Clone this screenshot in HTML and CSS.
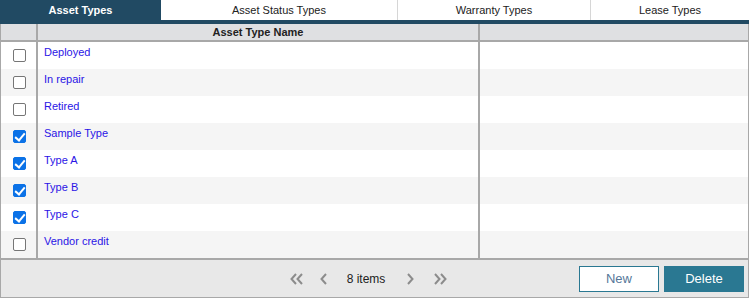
FILE: index.html
```html
<!DOCTYPE html>
<html lang="en">
<head>
    <meta charset="UTF-8">
    <title>Asset Types</title>
    <link rel="stylesheet" href="styles.css">
</head>
<body>
    <div class="panel">
        <div class="tabs">
            <div class="tab active" style="width: 161px">Asset Types</div>
            <div class="tab" style="width: 237px">Asset Status Types</div>
            <div class="tab" style="width: 193px">Warranty Types</div>
            <div class="tab last">Lease Types</div>
        </div>

        <div class="grid">
            <div class="grid-head">
                <div class="cell check"></div>
                <div class="cell name">Asset Type Name</div>
                <div class="cell rest"></div>
            </div>
            <div class="row">
                <div class="cell check"><span class="box"></span></div>
                <div class="cell name">Deployed</div>
                <div class="cell rest"></div>
            </div>
            <div class="row alt">
                <div class="cell check"><span class="box"></span></div>
                <div class="cell name">In repair</div>
                <div class="cell rest"></div>
            </div>
            <div class="row">
                <div class="cell check"><span class="box"></span></div>
                <div class="cell name">Retired</div>
                <div class="cell rest"></div>
            </div>
            <div class="row alt">
                <div class="cell check"><span class="box on"></span></div>
                <div class="cell name">Sample Type</div>
                <div class="cell rest"></div>
            </div>
            <div class="row">
                <div class="cell check"><span class="box on"></span></div>
                <div class="cell name">Type A</div>
                <div class="cell rest"></div>
            </div>
            <div class="row alt">
                <div class="cell check"><span class="box on"></span></div>
                <div class="cell name">Type B</div>
                <div class="cell rest"></div>
            </div>
            <div class="row">
                <div class="cell check"><span class="box on"></span></div>
                <div class="cell name">Type C</div>
                <div class="cell rest"></div>
            </div>
            <div class="row alt">
                <div class="cell check"><span class="box"></span></div>
                <div class="cell name">Vendor credit</div>
                <div class="cell rest"></div>
            </div>
        </div>

        <div class="footer">
            <div class="pager">
                <svg class="nav" width="14" height="12" viewBox="0 0 14 12"><polyline points="6,1 1.5,6 6,11" /><polyline points="12,1 7.5,6 12,11" /></svg>
                <svg class="nav single" width="8" height="12" viewBox="0 0 8 12"><polyline points="6,1 1.5,6 6,11" /></svg>
                <span class="count">8 items</span>
                <svg class="nav single" width="8" height="12" viewBox="0 0 8 12"><polyline points="2,1 6.5,6 2,11" /></svg>
                <svg class="nav" width="14" height="12" viewBox="0 0 14 12"><polyline points="2,1 6.5,6 2,11" /><polyline points="8,1 12.5,6 8,11" /></svg>
            </div>
            <div class="actions">
                <button class="btn new-btn">New</button>
                <button class="btn delete-btn">Delete</button>
            </div>
        </div>
    </div>
</body>
</html>
```

FILE: styles.css
```css
* {
    margin: 0;
    padding: 0;
    box-sizing: border-box;
}

body {
    font-family: 'Liberation Sans', Arial, sans-serif;
    font-size: 11px;
    background: #fff;
    width: 749px;
    height: 298px;
    overflow: hidden;
}

.panel {
    width: 749px;
}

/* Tabs */
.tabs {
    display: flex;
    height: 24px;
    border-bottom: 4px solid #214a63;
}

.tab {
    height: 20px;
    line-height: 20px;
    text-align: center;
    color: #222;
    font-size: 11px;
    border-right: 1px solid #d6d6d6;
}

.tab.last {
    flex: 1;
    border-right: none;
}

.tab.active {
    background: #214a63;
    color: #fff;
    font-weight: bold;
    border-right: none;
}

/* Grid */
.grid {
    border-left: 1px solid #a8a8a8;
    border-right: 1px solid #a8a8a8;
}

.grid-head,
.row {
    display: flex;
}

.grid-head {
    height: 18px;
    background: #dfe0e2;
    border-bottom: 2px solid #a8a8a8;
    font-weight: bold;
    color: #222;
}

.grid-head .cell {
    line-height: 16px;
}

.grid-head .name {
    text-align: center;
}

.row {
    height: 27px;
    background: #fff;
}

.row.alt {
    background: #f5f5f5;
}

.cell {
    border-right: 2px solid #a8a8a8;
}

.cell.check {
    width: 37px;
    display: flex;
    justify-content: center;
    align-items: flex-end;
    padding-bottom: 7px;
    padding-left: 2px;
}

.cell.name {
    width: 442px;
    padding-left: 6px;
    padding-top: 4px;
    color: #2a14e6;
}

.grid-head .cell.name {
    padding: 0;
    color: #222;
}

.cell.rest {
    flex: 1;
    border-right: none;
}

.box {
    display: block;
    width: 13px;
    height: 13px;
    border: 1px solid #767676;
    border-radius: 2px;
    background: #fff;
    position: relative;
}

.box.on {
    background: #0b72e7;
    border-color: #0b72e7;
}

.box.on::after {
    content: "";
    position: absolute;
    left: 3px;
    top: 0px;
    width: 4px;
    height: 8px;
    border-right: 2px solid #fff;
    border-bottom: 2px solid #fff;
    transform: rotate(40deg);
}

/* Footer */
.footer {
    height: 40px;
    background: #e8e8e8;
    border: 1px solid #a8a8a8;
    border-top: 2px solid #a8a8a8;
    display: flex;
    align-items: center;
}

.pager {
    display: flex;
    align-items: center;
    margin-left: 289px;
    color: #222;
}

.nav {
    fill: none;
    stroke: #8c8c8c;
    stroke-width: 2;
}

.nav.single {
    margin: 0 0 0 16px;
}

.count {
    font-size: 12px;
    width: 80px;
    text-align: center;
    margin-left: -2px;
}

.count + .nav.single {
    margin: 0 19px 0 0;
}

.actions {
    margin-left: auto;
    margin-right: 4px;
    display: flex;
    gap: 5px;
}

.btn {
    width: 80px;
    height: 26px;
    font-family: 'Liberation Sans', Arial, sans-serif;
    font-size: 13px;
    border: 1px solid #2a7892;
    cursor: pointer;
}

.new-btn {
    background: #fff;
    color: #557799;
}

.delete-btn {
    background: #2a7892;
    color: #fff;
}
```
